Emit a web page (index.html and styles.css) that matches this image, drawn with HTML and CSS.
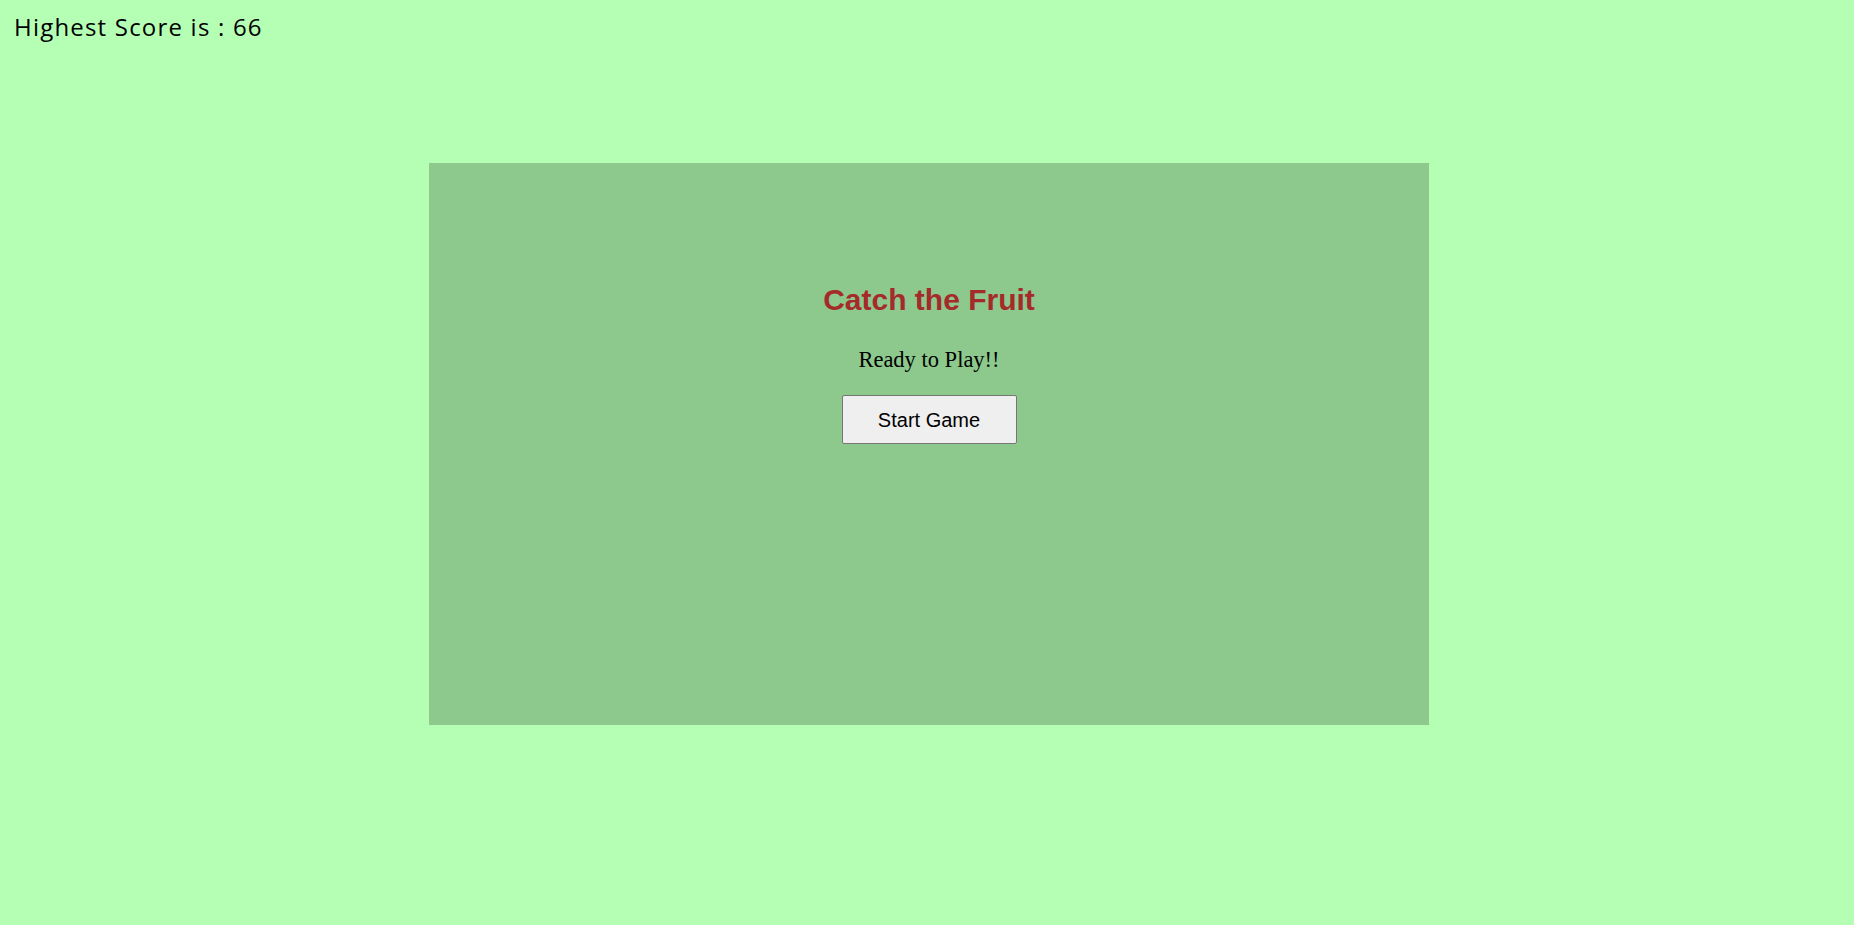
FILE: index.html
```html
<!DOCTYPE html>
<html>
<head>
<meta charset="utf-8">
<link rel="stylesheet" href="styles.css">
</head>
<body>
<header class="score">Highest Score is : 66</header>
<main class="game">
  <h1 class="title">Catch the Fruit</h1>
  <p class="status">Ready to Play!!</p>
  <button class="start">Start Game</button>
</main>
</body>
</html>
```
FILE: styles.css
```css
html, body {
  margin: 0;
  padding: 0;
  height: 100%;
}
body {
  background: #b4ffb4;
  overflow: hidden;
}
.score {
  font-family: "Open Sans", Lato, sans-serif;
  font-size: 24px;
  color: #000;
  padding: 12px 0 0 14px;
  height: 38px;
  line-height: 30px;
  letter-spacing: 1.2px;
}
.game {
  width: 1000px;
  height: 562px;
  margin: 113px 0 0 calc(50% - 498px);
  background: #8dc98d;
  display: flex;
  flex-direction: column;
  align-items: center;
  padding-top: 119px;
  box-sizing: border-box;
}
.title {
  margin: 0;
  font-family: "Liberation Sans", Arial, sans-serif;
  font-weight: bold;
  font-size: 30px;
  color: #a52a2a;
  line-height: 35px;
}
.status {
  margin: 30px 0 0;
  font-family: "Liberation Serif", "Times New Roman", serif;
  font-size: 22.5px;
  line-height: 25px;
  color: #000;
}
.start {
  margin-top: 23px;
  width: 175px;
  height: 49px;
  font-family: "Liberation Sans", Arial, sans-serif;
  font-size: 20px;
  line-height: 23px;
  padding: 2px 0 0;
  color: #000;
  background: #efefef;
  border: 1px solid #767676;
  border-radius: 2px;
}
```
